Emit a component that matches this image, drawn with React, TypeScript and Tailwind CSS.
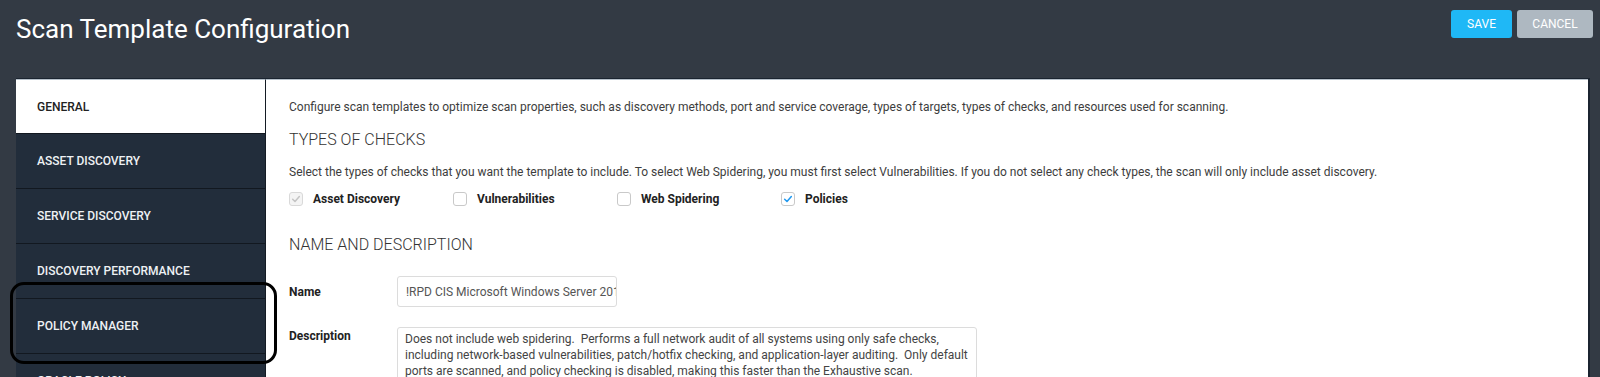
import React from 'react';

const navItems = [
  'GENERAL',
  'ASSET DISCOVERY',
  'SERVICE DISCOVERY',
  'DISCOVERY PERFORMANCE',
  'POLICY MANAGER',
  'ORACLE POLICY',
  'LOTUS NOTES POLICY',
];

const checks = [
  { label: 'Asset Discovery', state: 'locked' },
  { label: 'Vulnerabilities', state: 'off' },
  { label: 'Web Spidering', state: 'off' },
  { label: 'Policies', state: 'on' },
];

const description =
  'Does not include web spidering.  Performs a full network audit of all systems using only safe checks,\nincluding network-based vulnerabilities, patch/hotfix checking, and application-layer auditing.  Only default\nports are scanned, and policy checking is disabled, making this faster than the Exhaustive scan.';

const CheckBox: React.FC<{ state: string }> = ({ state }) => (
  <span
    className={`flex h-[14px] w-[14px] shrink-0 items-center justify-center rounded-[3px] border ${
      state === 'locked' ? 'border-[#d9d9d9] bg-[#f4f4f4]' : 'border-[#c9c9c9] bg-white'
    }`}
  >
    {state !== 'off' && (
      <svg viewBox="0 0 12 12" className="h-[10px] w-[10px]">
        <path
          d="M2 6.3 L4.8 9 L10 3"
          fill="none"
          stroke={state === 'on' ? '#1f98ef' : '#c4c4c4'}
          strokeWidth="1.8"
          strokeLinecap="round"
          strokeLinejoin="round"
        />
      </svg>
    )}
  </span>
);

export default function App() {
  return (
    <div className="min-h-screen bg-[#333a44] font-['Roboto',sans-serif]">
      <div className="flex h-[78px] items-start justify-between pl-4 pr-[7px]">
        <h1 className="mt-[13px] text-[26px] leading-[32px] text-white">Scan Template Configuration</h1>
        <div className="mt-[10px] flex gap-[5px]">
          <button className="h-[28px] w-[61px] rounded-[3px] bg-[#1fb8f6] text-[12px] text-white">SAVE</button>
          <button className="h-[28px] w-[76px] rounded-[3px] bg-[#aeb8c1] text-[12px] text-white">CANCEL</button>
        </div>
      </div>

      <div className="ml-4 mr-[10px] flex border-r-2 border-t border-[#1b2430] bg-white">
        <div className="w-[250px] shrink-0 border-t border-[#b7c1cb] bg-[#222d3b] border-r border-r-[#141b24]">
          {navItems.map((item, i) => (
            <div
              key={item}
              className={`flex items-center pl-[21px] text-[12px] font-medium ${
                i === 0
                  ? 'h-[53px] bg-white text-[#222]'
                  : 'h-[55px] border-t border-[#121820] text-[#eef1f4]'
              }`}
            >
              {item}
            </div>
          ))}
        </div>

        <div className="flex-1 border-t border-[#b7c1cb] pl-[23px] pt-[19px] text-[#3d3d3d]">
          <p className="text-[12px] leading-4">
            Configure scan templates to optimize scan properties, such as discovery methods, port and service coverage,
            types of targets, types of checks, and resources used for scanning.
          </p>

          <h2 className="mt-[15px] text-[16px] font-light leading-5 text-[#333]">TYPES OF CHECKS</h2>
          <p className="mt-[14px] text-[12px] leading-4">
            Select the types of checks that you want the template to include. To select Web Spidering, you must first
            select Vulnerabilities. If you do not select any check types, the scan will only include asset discovery.
          </p>

          <div className="mt-[10px] flex">
            {checks.map((c) => (
              <label key={c.label} className="flex w-[164px] items-center gap-[10px] text-[12px] font-bold text-[#222]">
                <CheckBox state={c.state} />
                {c.label}
              </label>
            ))}
          </div>

          <h2 className="mt-[27px] text-[16px] font-light leading-5 text-[#333]">NAME AND DESCRIPTION</h2>

          <div className="mt-[21px] flex items-center">
            <span className="w-[108px] text-[12px] font-bold text-[#222]">Name</span>
            <div className="flex h-[31px] w-[220px] items-center overflow-hidden whitespace-nowrap rounded-[3px] border border-[#dcdcdc] px-[8px] text-[12px] text-[#555]">
              !RPD CIS Microsoft Windows Server 2016
            </div>
          </div>

          <div className="mt-[20px] flex items-start pb-6">
            <span className="mt-[1px] w-[108px] text-[12px] font-bold leading-4 text-[#222]">Description</span>
            <textarea
              readOnly
              value={description}
              className="h-[72px] w-[580px] resize-none overflow-hidden rounded-[3px] border border-[#dcdcdc] px-[7px] pt-[3px] text-[12px] leading-4 text-[#444] outline-none"
            />
          </div>
        </div>
      </div>

      <div className="pointer-events-none absolute left-[10px] top-[282px] h-[82px] w-[267px] rounded-[14px] border-[3px] border-black" />
    </div>
  );
}
